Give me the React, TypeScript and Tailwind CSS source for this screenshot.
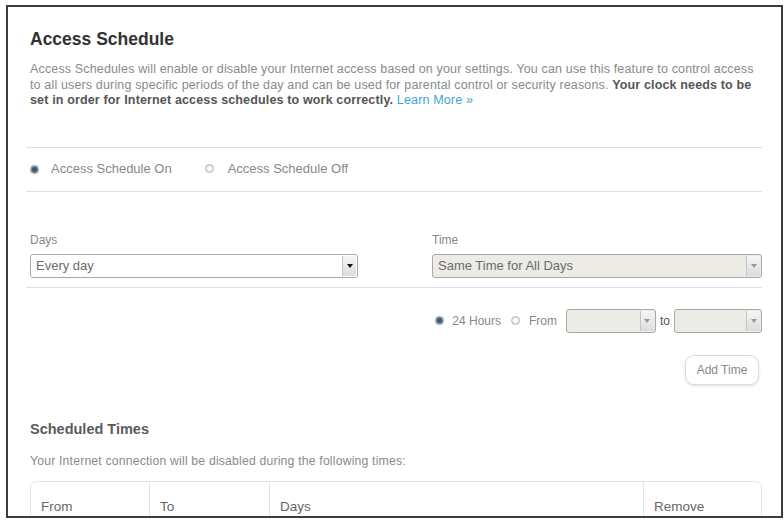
import { ReactNode } from "react";

function Radio({ checked }: { checked?: boolean }) {
  return checked ? (
    <span className="inline-block h-[9px] w-[9px] shrink-0 rounded-full border border-[#9aa9b5] bg-[radial-gradient(circle,#3d5366_35%,#8ea2b2_75%)] shadow-[0_0_2px_#b9d3e6]" />
  ) : (
    <span className="inline-block h-[9px] w-[9px] shrink-0 rounded-full border border-[#b8b8b8] bg-[radial-gradient(circle,#ffffff_30%,#d4d4d4_80%)]" />
  );
}

function Select({
  value,
  disabled,
  dark,
  className,
}: {
  value?: string;
  disabled?: boolean;
  dark?: boolean;
  className?: string;
}) {
  return (
    <div
      className={
        "flex h-[24px] items-stretch rounded-[3px] border border-[#a9a9a9] " +
        (disabled ? "bg-[#ecebe6] " : "bg-white ") +
        (className ?? "")
      }
    >
      <div className="flex flex-1 items-center px-[5px] text-[13px] text-[#6b6b6b]">{value}</div>
      <div className="my-[1px] mr-[1px] flex w-[14px] items-center justify-center rounded-r-[2px] border-l border-[#c4c4c4] bg-gradient-to-b from-[#f6f6f6] to-[#dcdcdc]">
        <span
          className={
            "h-0 w-0 border-x-[3px] border-t-[4px] border-x-transparent " +
            (dark ? "border-t-[#111]" : "border-t-[#999]")
          }
        />
      </div>
    </div>
  );
}

function Th({ children, className }: { children?: ReactNode; className?: string }) {
  return (
    <div className={"pl-[10px] pt-[17px] text-[13.5px] leading-[16px] text-[#666] " + (className ?? "")}>
      {children}
    </div>
  );
}

export default function App() {
  return (
    <div className="h-[520px] w-[784px] bg-white pl-[6px] pt-[5px] font-['Liberation_Sans',Arial,sans-serif]">
      <div className="h-[513px] w-[777px] overflow-hidden border-2 border-[#3c3c3c] pl-[22px] pr-[19px] pt-[22px]">
        <h1 className="text-[17.5px] font-bold leading-[20px] text-[#333]">Access Schedule</h1>
        <p className="mt-[13px] whitespace-nowrap text-[12.5px] leading-[15.5px] tracking-[0.15px] text-[#8a8a8a]">
          Access Schedules will enable or disable your Internet access based on your settings. You can use this feature to control access
          <br />
          to all users during specific periods of the day and can be used for parental control or security reasons.{" "}
          <b className="text-[#555]">Your clock needs to be</b>
          <br />
          <b className="text-[#555]">set in order for Internet access schedules to work correctly.</b>{" "}
          <span className="text-[#3fa5d6]">Learn More »</span>
        </p>

        <div className="mt-[38px] -ml-[4px] border-t border-[#dedede]" />
        <div className="flex h-[43px] items-center text-[13px] text-[#888]">
          <Radio checked />
          <span className="ml-[12px]">Access Schedule On</span>
          <span className="ml-[33px]">
            <Radio />
          </span>
          <span className="ml-[14px]">Access Schedule Off</span>
        </div>
        <div className="-ml-[4px] border-t border-[#dedede]" />

        <div className="mt-[41px] grid grid-cols-[328px_330px] justify-between">
          <div>
            <div className="text-[12px] leading-[14px] text-[#888]">Days</div>
            <Select className="mt-[7px]" value="Every day" dark />
          </div>
          <div>
            <div className="text-[12px] leading-[14px] text-[#888]">Time</div>
            <Select className="mt-[7px]" value="Same Time for All Days" disabled />
          </div>
        </div>
        <div className="mt-[9px] -ml-[4px] border-t border-[#dedede]" />

        <div className="mt-[21px] flex items-center justify-end text-[12px] text-[#888]">
          <Radio checked />
          <span className="ml-[8px]">24 Hours</span>
          <span className="ml-[10px]">
            <Radio />
          </span>
          <span className="ml-[9px]">From</span>
          <Select className="ml-[9px] w-[90px]" disabled />
          <span className="mx-[4px] text-[#555]">to</span>
          <Select className="w-[88px]" disabled />
        </div>

        <div className="mt-[22px] flex justify-end pr-[3px]">
          <div className="flex h-[30px] w-[74px] items-center justify-center rounded-[9px] border border-[#dcdcdc] bg-white text-[12px] text-[#888] shadow-[0_1px_3px_rgba(0,0,0,0.12)]">
            Add Time
          </div>
        </div>

        <h2 className="mt-[35px] text-[14.5px] font-bold leading-[18px] text-[#5a5a5a]">Scheduled Times</h2>
        <p className="mt-[16px] text-[12.2px] leading-[15px] tracking-[0.2px] text-[#8a8a8a]">
          Your Internet connection will be disabled during the following times:
        </p>

        <div className="mt-[12px] grid h-[60px] grid-cols-[118px_120px_1fr_118px] rounded-t-[6px] border border-[#e4e4e4]">
          <Th>From</Th>
          <Th className="border-l border-[#e4e4e4]">To</Th>
          <Th className="border-l border-[#e4e4e4]">Days</Th>
          <Th className="border-l border-[#e4e4e4]">Remove</Th>
        </div>
      </div>
    </div>
  );
}
